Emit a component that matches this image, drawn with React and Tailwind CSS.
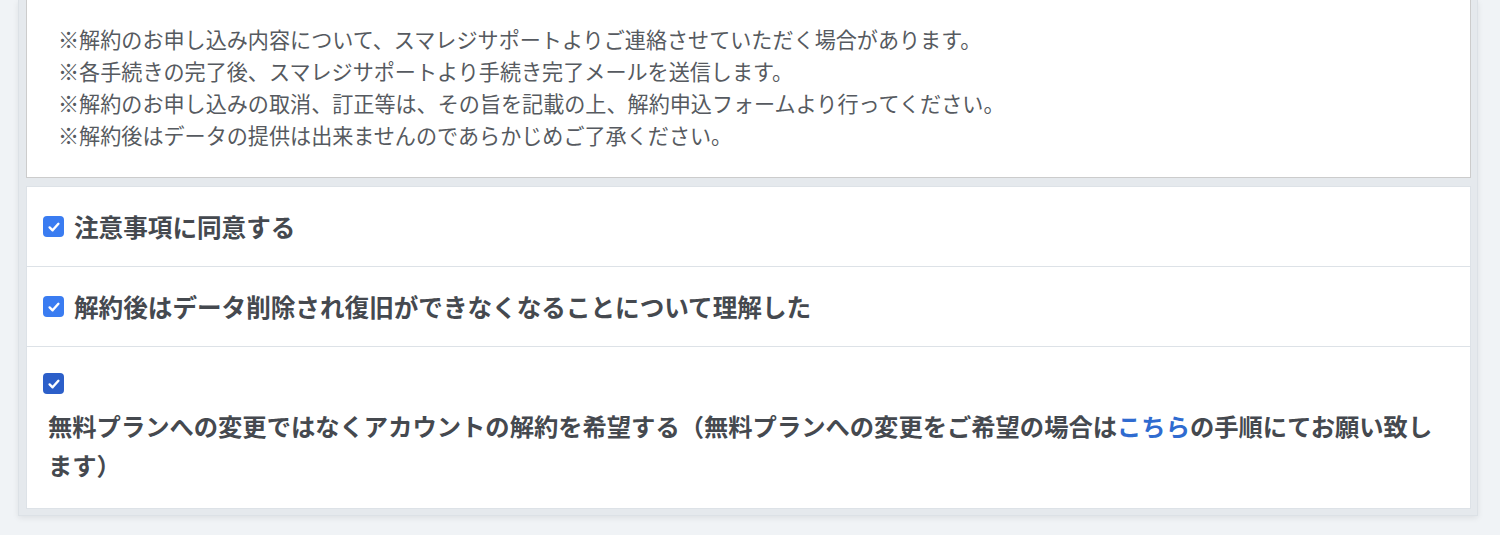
import React from "react";

function Check({ dark }) {
  return (
    <span
      className={`flex items-center justify-center w-[21px] h-[21px] rounded-[4px] shrink-0 ${
        dark ? "bg-[#2c5fc9]" : "bg-[#3a7cf1]"
      }`}
    >
      <svg width="14" height="14" viewBox="0 0 14 14" fill="none">
        <path
          d="M2.6 7.4 L5.6 10.3 L11.4 3.8"
          stroke="white"
          strokeWidth="2.4"
          strokeLinecap="round"
          strokeLinejoin="round"
        />
      </svg>
    </span>
  );
}

export default function App() {
  const font = { fontFamily: '"Noto Sans CJK JP", "Noto Sans", sans-serif' };
  return (
    <div className="w-[1500px] h-[535px] bg-[#f0f3f6] overflow-hidden" style={font}>
      <div className="ml-[18px] w-[1460px] bg-[#e5e9ed] border border-t-0 border-[#dce1e6] pl-[7px] pr-[6px] pb-[6px] shadow-[0_2px_6px_rgba(0,0,0,0.08)]">
        <div className="bg-white border border-t-0 border-[#cccccc] pl-[31px] pt-[23px] pb-[26px] text-[21.1px] leading-[32px] text-[#565a60]">
          <p>※解約のお申し込み内容について、スマレジサポートよりご連絡させていただく場合があります。</p>
          <p>※各手続きの完了後、スマレジサポートより手続き完了メールを送信します。</p>
          <p>※解約のお申し込みの取消、訂正等は、その旨を記載の上、解約申込フォームより行ってください。</p>
          <p>※解約後はデータの提供は出来ませんのであらかじめご了承ください。</p>
        </div>
        <div className="mt-[8px] bg-white border border-[#dde2e7] text-[#45494f] font-bold text-[24.6px]">
          <div className="h-[80px] flex items-center pl-[16px] gap-[10px] border-b border-[#dde2e7]">
            <Check />
            <span>注意事項に同意する</span>
          </div>
          <div className="h-[80px] flex items-center pl-[16px] gap-[10px] border-b border-[#dde2e7]">
            <Check />
            <span>解約後はデータ削除され復旧ができなくなることについて理解した</span>
          </div>
          <div className="pl-[21px] pr-[20px] pt-[26px] pb-[24px]">
            <div className="-ml-[5px] h-[21px] flex">
              <Check dark />
            </div>
            <p className="mt-[12px] leading-[39px] text-[24.3px]">
              無料プランへの変更ではなくアカウントの解約を希望する（無料プランへの変更をご希望の場合は<span className="text-[#2f6bd0]">こちら</span>の手順にてお願い致します）
            </p>
          </div>
        </div>
      </div>
    </div>
  );
}
